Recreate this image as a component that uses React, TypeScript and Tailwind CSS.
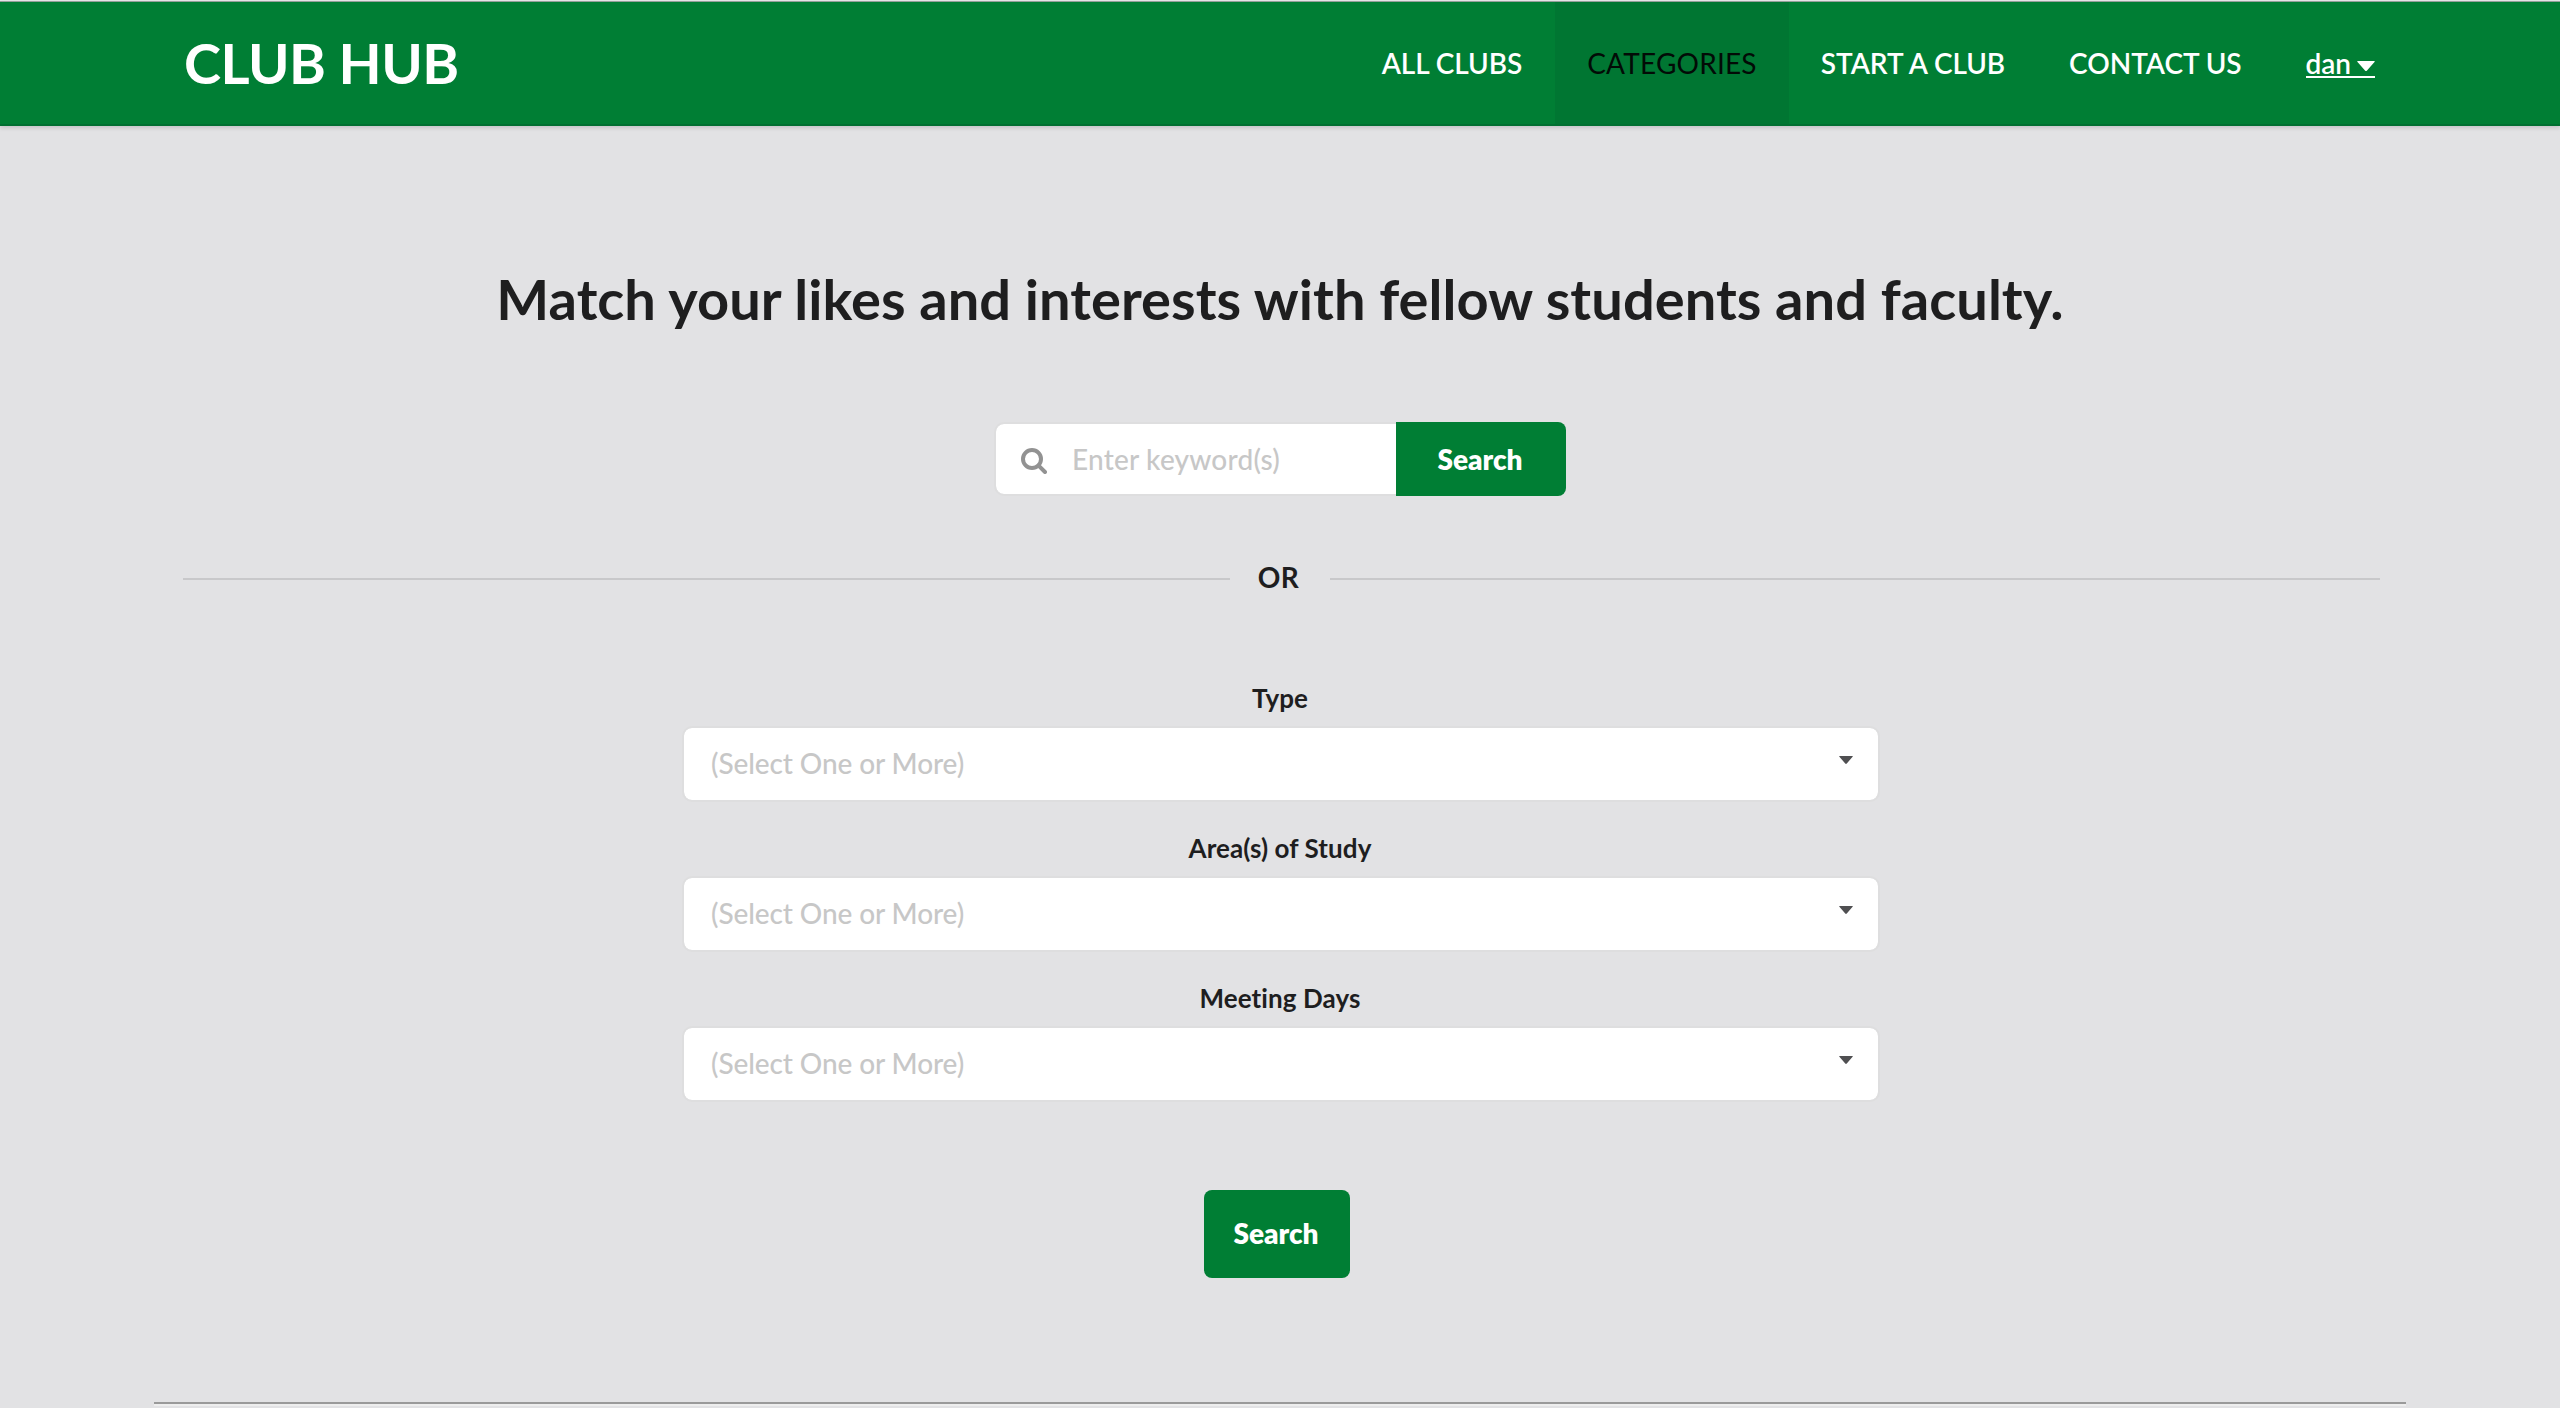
const fields = ["Type", "Area(s) of Study", "Meeting Days"];

function Caret({ className }: { className: string }) {
  return (
    <svg viewBox="0 0 18 10" preserveAspectRatio="none" className={className} fill="currentColor">
      <path d="M1 0h16q1.4 0 .5 1L10 9.4q-1 1-2 0L.5 1Q-.4 0 1 0z" />
    </svg>
  );
}

function SearchIcon() {
  return (
    <svg viewBox="0 0 26 26" className="mt-[3px] ml-[25px] h-[26px] w-[26px] text-[#929292]" fill="none" stroke="currentColor">
      <circle cx="11" cy="11" r="9" strokeWidth="4" />
      <path d="M17.6 17.6 24 24" strokeWidth="4" strokeLinecap="round" />
    </svg>
  );
}

function Dropdown({ label }: { label: string }) {
  return (
    <div className="mb-[30px] flex w-full flex-col">
      <label className="mb-3 pr-[2px] text-center text-[26px] leading-[32px] font-bold tracking-[0.08px] text-[#1e1e1f]">
        {label}
      </label>
      <div className="flex h-[76px] items-center justify-between rounded-[10px] border-2 border-[#dededf] bg-white bg-clip-padding pr-[25px] pl-[27px]">
        <span className="mb-[2px] text-[28px] leading-[34px] font-medium tracking-[-0.1px] text-[#c7c7c7]">
          (Select One or More)
        </span>
        <Caret className="mb-[8px] h-[8px] w-[14px] text-[#4f4f51]" />
      </div>
    </div>
  );
}

function Rule({ className }: { className: string }) {
  return <div className={`mt-1 h-[2px] bg-[#c8c8ca] ${className}`} />;
}

export default function App() {
  return (
    <div className="flex h-[1408px] w-[2560px] flex-col overflow-hidden bg-[#e2e2e4] font-['Lato',sans-serif] [font-variant-ligatures:none]">
      <div className="h-px bg-[#e8e8ea]" />
      <header className="flex h-[125px] shrink-0 justify-between border-t border-b-2 border-t-[#96a09b] border-b-[#017031] bg-[#007e34] pr-[185px] pl-[184px] text-white shadow-[0_2px_4px_rgba(34,36,38,0.15)]">
        <div className="pt-[27px] text-[56px] leading-[67px] font-bold tracking-[-0.5px]">CLUB HUB</div>
        <nav className="flex text-[28px] leading-[34px] font-semibold tracking-[-0.05px]">
          <a className="pt-11 pr-[33px]">ALL CLUBS</a>
          <a className="bg-[#007632] px-8 pt-11 font-normal tracking-[0.2px] text-[#020b06]">CATEGORIES</a>
          <a className="px-8 pt-11">START A CLUB</a>
          <a className="px-8 pt-11">CONTACT US</a>
          <div className="pt-11 pl-8">
            <a className="flex h-8 items-end border-b-2 border-white">
              <span className="-mb-[4px]">dan</span>
              <Caret className="mb-[5px] ml-[6px] h-[10px] w-[18px]" />
            </a>
          </div>
        </nav>
      </header>

      <main className="flex flex-col items-center">
        <h1 className="mt-[139px] text-[56px] leading-[67px] font-bold tracking-[0.05px] text-[#1e1e1f]">
          Match your likes and interests with fellow students and faculty.
        </h1>

        <div className="mt-[90px] flex h-[74px] w-[572px]">
          <div className="flex w-[402px] items-center rounded-l-[10px] border-2 border-r-0 border-[#dededf] bg-white bg-clip-padding">
            <SearchIcon />
            <span className="ml-[25px] text-[28px] leading-[34px] font-medium tracking-[0.2px] text-[#c7c7c7]">
              Enter keyword(s)
            </span>
          </div>
          <button className="w-[170px] rounded-r-[8px] bg-[#007e34] pr-[2px] text-[28px] leading-[34px] font-extrabold text-white">
            Search
          </button>
        </div>

        <div className="mt-16 ml-[2px] flex w-[2197px] items-center text-[28px] leading-[34px] font-bold text-[#1e1e1f]">
          <Rule className="w-[1047px]" />
          <div className="w-[100px] pr-[2px] text-center tracking-[0.5px]">OR</div>
          <Rule className="flex-1" />
        </div>

        <form className="mt-[88px] ml-[2px] flex w-[1198px] flex-col">
          {fields.map((f) => (
            <Dropdown key={f} label={f} />
          ))}
          <button
            type="button"
            className="mt-[58px] ml-[522px] h-[88px] w-[146px] rounded-[8px] bg-[#007e34] pr-[2px] pb-[2px] text-[28px] leading-[34px] font-extrabold text-white"
          >
            Search
          </button>
        </form>

        <div className="mt-[124px] h-1 w-[2252px] border-t-2 border-b-2 border-t-[#9a9a9a] border-b-[#eeeeee]" />
      </main>
    </div>
  );
}
